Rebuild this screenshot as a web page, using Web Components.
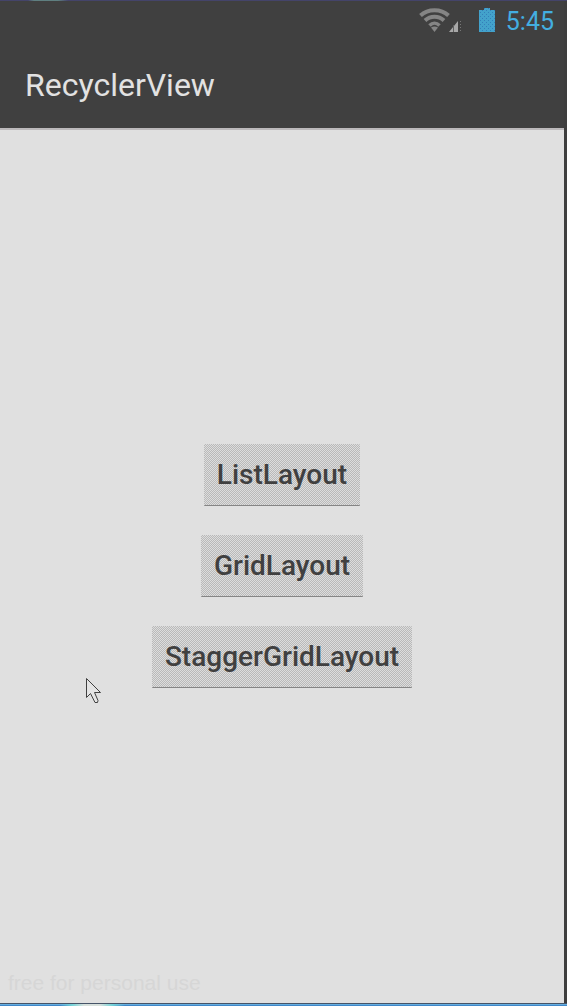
<!DOCTYPE html>
<html lang="en">
<head>
<meta charset="utf-8">
<meta name="viewport" content="width=device-width, initial-scale=1">
<title>RecyclerView</title>
<style>
body { margin: 0; font-family: Roboto, "Noto Sans", sans-serif; background: #e0e0e0; }
</style>
</head>
<body>
<phone-screen>
  <status-bar slot="top" time="5:45"></status-bar>
  <title-bar slot="top">RecyclerView</title-bar>
  <layout-button>ListLayout</layout-button>
  <layout-button>GridLayout</layout-button>
  <layout-button>StaggerGridLayout</layout-button>
  <licence-note slot="note">free for personal use</licence-note>
  <mouse-pointer slot="overlay"></mouse-pointer>
</phone-screen>
<script>
const define = (name, html, setup) => {
  const template = document.createElement('template');
  template.innerHTML = html;
  customElements.define(name, class extends HTMLElement {
    constructor() {
      super();
      this.attachShadow({ mode: 'open' }).append(template.content.cloneNode(true));
    }
    connectedCallback() { if (setup) setup(this); }
  });
};

define('phone-screen', `
<style>
  :host { display: flex; flex-direction: column; box-sizing: border-box; min-height: 100vh; position: relative;
    background: #e0e0e0; border-right: 3px solid #3e3e3e; }
  header { background: #404040; }
  header::before { content: ""; display: block; height: 1px; margin-right: -3px;
    background: linear-gradient(90deg, #44446a 0 28px, #5f7f80 34px 58px, #44446a 68px); }
  main { flex: 1; display: grid; grid-template-rows: 1fr auto 1fr; border-top: 2px solid #bcb9bb; padding-bottom: 2px; }
  nav { grid-row: 2; display: flex; flex-direction: column; align-items: center; gap: 29px; }
  aside { grid-row: 3; align-self: end; }
  footer { height: 3px; margin-right: -3px;
    background: linear-gradient(90deg, transparent 60px, #75d4d8 72px, #d8e0dc 84px 100px, #75d4d8 112px, transparent 125px) 0 1px no-repeat,
      linear-gradient(#465468 0 1px, #66aee0 1px 2px, #3f88ca 2px); }
</style>
<header><slot name="top"></slot></header>
<main><nav aria-label="Layouts"><slot></slot></nav><aside><slot name="note"></slot></aside></main>
<footer></footer>
<slot name="overlay"></slot>`);

define('status-bar', `
<style>
  :host { display: flex; justify-content: flex-end; align-items: center; height: 41px; padding-right: 10px; }
  svg { display: block; margin-bottom: 3px; }
  .signal { margin-right: 18px; }
  .battery { margin-right: 11px; }
  time { font-size: 25px; line-height: 40px; color: #43aee0; }
</style>
<svg class="signal" width="42" height="26" viewBox="0 0 42 26" aria-hidden="true">
  <g fill="none" stroke="#858585" stroke-width="4">
    <path d="M1.5 8.5C9 1.5 22 1.5 29.500 8.500"/>
    <path d="M6 13.500C11.500 8.500 19.500 8.500 25 13.500"/>
    <path d="M10.500 18.500C13.500 15.500 17.500 15.500 20.500 18.500" stroke-width="3.500"/>
  </g>
  <path d="M12 20.500Q15.500 18.500 19 20.500L15.500 25Z" fill="#858585"/>
  <path d="M30 25L39 14V25Z" fill="#a8a8a8"/>
  <path d="M34.500 18V25" stroke="#606060"/>
  <path d="M41.500 14V25" stroke="#777" stroke-dasharray="1 2"/>
</svg>
<svg class="battery" width="16" height="24" viewBox="0 0 16 24" aria-hidden="true">
  <defs><pattern id="dots" width="4" height="4" patternUnits="userSpaceOnUse">
    <path d="M0 0h4v4H0z" fill="#43a2cb"/><path d="M1 0h1v1H1zM3 2h1v1H3z" fill="#347fba"/>
  </pattern></defs>
  <path d="M5 0H11V2H16V24H0V2H5Z" fill="url(#dots)"/>
</svg>
<time></time>`, el => { el.shadowRoot.querySelector('time').textContent = el.getAttribute('time'); });

define('title-bar', `
<style>
  :host { display: flex; align-items: center; height: 86px; padding-left: 25px; }
  h1 { margin: 0; font-size: 32px; line-height: 40px; font-weight: 400; color: #e2e2e2; }
</style>
<h1><slot></slot></h1>`);

define('layout-button', `
<style>
  :host { display: block; }
  button { display: block; box-sizing: border-box; height: 62px; margin: 0; padding: 2px 13px 0; border: 0;
    border-bottom: 1px solid #858585; border-radius: 1px; font: 500 28px/40px Roboto, "Noto Sans", sans-serif; color: #404040;
    background: repeating-conic-gradient(#b9b9b9 0 25%, #dddddd 0 50%) 0 0 / 2px 2px; }
</style>
<button type="button"><slot></slot></button>`);

define('licence-note', `
<style>
  :host { display: block; padding: 0 0 2px 8px; }
  p { margin: 0; font: 21px/32px "Liberation Sans", sans-serif; color: #d6d6d6; }
</style>
<p><slot></slot></p>`);

define('mouse-pointer', `
<style>
  :host { display: block; position: absolute; left: 86px; top: 678px; pointer-events: none; }
  svg { display: block; }
</style>
<svg width="16" height="26" viewBox="0 0 16 26" aria-hidden="true">
  <path d="M.5 .5V19.500L4.500 15.500L9 24.500H11.500L12 22.500L8.500 14.500H14.500Z" fill="#e4e4e4" stroke="#404040"/>
</svg>`);
</script>
</body>
</html>
